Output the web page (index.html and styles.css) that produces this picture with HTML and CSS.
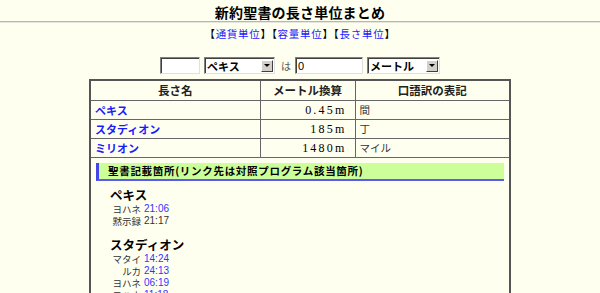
FILE: index.html
```html
<!DOCTYPE html>
<html lang="ja">
<head>
<meta charset="utf-8">
<title>新約聖書の長さ単位まとめ</title>
<link rel="stylesheet" href="styles.css">
</head>
<body>
<h1 class="title">新約聖書の長さ単位まとめ</h1>
<hr class="rule">
<p class="nav">【<a href="#">通貨単位</a>】【<a href="#">容量単位</a>】【<a href="#">長さ単位</a>】</p>
<form class="conv">
  <input class="field short" type="text" value="">
  <span class="sel sel-a"><select><option>ペキス</option></select><span class="arrow"></span></span>
  <span class="ha">は</span>
  <input class="field long" type="text" value="0">
  <span class="sel sel-b"><select><option>メートル</option></select><span class="arrow"></span></span>
</form>
<table class="units">
  <colgroup><col class="c1"><col class="c2"><col class="c3"></colgroup>
  <thead>
    <tr class="hrow"><th>長さ名</th><th>メートル換算</th><th>口語訳の表記</th></tr>
  </thead>
  <tbody>
    <tr class="drow"><td><a href="#" class="name">ペキス</a></td><td class="val">0.45m</td><td class="kogo">間</td></tr>
    <tr class="drow"><td><a href="#" class="name">スタディオン</a></td><td class="val">185m</td><td class="kogo">丁</td></tr>
    <tr class="drow"><td><a href="#" class="name">ミリオン</a></td><td class="val">1480m</td><td class="kogo">マイル</td></tr>
    <tr>
      <td colspan="3" class="refs">
        <h2 class="bar">聖書記載箇所(リンク先は対照プログラム該当箇所)</h2>
        <h3 class="unit">ペキス</h3>
        <dl class="list">
          <dt>ヨハネ</dt><dd><a href="#">21:06</a></dd>
          <dt>黙示録</dt><dd>21:17</dd>
        </dl>
        <h3 class="unit">スタディオン</h3>
        <dl class="list">
          <dt>マタイ</dt><dd><a href="#">14:24</a></dd>
          <dt>ルカ</dt><dd><a href="#">24:13</a></dd>
          <dt>ヨハネ</dt><dd><a href="#">06:19</a></dd>
          <dt>ヨハネ</dt><dd><a href="#">11:18</a></dd>
        </dl>
      </td>
    </tr>
  </tbody>
</table>
</body>
</html>
```
FILE: styles.css
```css
html, body {
  margin: 0;
  padding: 0;
  background: #fffff0;
  color: #000;
  font-family: "Noto Sans CJK JP", "Liberation Sans", sans-serif;
}
a { color: #1a1aff; text-decoration: none; }

.title {
  margin: 0;
  padding-top: 3px;
  height: 18px;
  font-size: 14px;
  line-height: 18px;
  font-weight: 700;
  letter-spacing: 0.2px;
  text-align: center;
}
.rule {
  margin: 0;
  border: 0;
  border-top: 1px solid #b8b8b0;
  border-bottom: 1px solid #e6e6de;
  height: 0;
}
.nav {
  margin: 4px 0 0;
  font-size: 10.5px;
  line-height: 14px;
  letter-spacing: 0.7px;
  text-align: center;
}
.conv {
  margin: 16px 0 0;
  height: 17px;
  display: flex;
  justify-content: center;
  align-items: center;
  gap: 4px;
  font-size: 11px;
}
.field {
  box-sizing: border-box;
  height: 17px;
  margin: 0;
  padding: 0 2px;
  border: 1px solid #808080;
  border-right-color: #e0e0e0;
  border-bottom-color: #e0e0e0;
  box-shadow: inset 1px 1px 0 #404040;
  background: #fff;
  font: 11px "Liberation Sans", sans-serif;
}
.short { width: 40px; }
.long { width: 68px; }
.sel {
  box-sizing: border-box;
  height: 17px;
  display: inline-flex;
  align-items: center;
  border: 1px solid #808080;
  border-right-color: #e0e0e0;
  border-bottom-color: #e0e0e0;
  box-shadow: inset 1px 1px 0 #404040;
  background: #fff;
  padding: 1px 1px 1px 2px;
}
.sel-a { width: 71px; }
.sel-b { width: 73px; }
.sel select {
  appearance: none;
  -webkit-appearance: none;
  border: 0;
  background: transparent;
  flex: 1;
  min-width: 0;
  padding: 0;
  margin: 0;
  height: 14px;
  font: 700 11px "Noto Sans CJK JP", sans-serif;
  line-height: 14px;
  color: #000;
}
.arrow {
  width: 12px;
  height: 12px;
  box-sizing: border-box;
  background: #d4d0c8;
  border: 1px solid #fff;
  border-right-color: #404040;
  border-bottom-color: #404040;
  display: flex;
  align-items: center;
  justify-content: center;
}
.arrow::after {
  content: "";
  border-left: 3px solid transparent;
  border-right: 3px solid transparent;
  border-top: 3px solid #000;
}
.ha {
  font-size: 10px;
  width: 10px;
  color: #555;
  margin: 0 0 0 2px;
}

.units {
  margin: 5px auto 0;
  width: 420px;
  border-collapse: collapse;
  border: 2px solid #555;
  table-layout: fixed;
  font-size: 11px;
}
.c1 { width: 170px; }
.c2 { width: 95px; }
.c3 { width: 155px; }
.units th, .units td {
  border: 1px solid #666;
  padding: 0 4px;
  line-height: 14px;
}
.hrow { height: 20px; }
.drow { height: 19px; }
.units th {
  font-size: 11.5px;
  font-weight: 700;
  color: #222;
}
.name { font-weight: 700; font-size: 11px; }
.val {
  text-align: right;
  font-family: "Liberation Serif", serif;
  font-size: 12px;
  letter-spacing: 2.2px;
  padding-right: 8px !important;
}
.kogo { font-size: 10.5px; color: #333; }

.refs {
  padding: 5px 5px 20px !important;
  vertical-align: top;
}
.bar {
  margin: 0;
  height: 16px;
  line-height: 16px;
  background: #ccff99;
  border-left: 3px solid #4646e6;
  border-bottom: 2px solid #5a5aee;
  padding-left: 9px;
  font-size: 10.5px;
  font-weight: 700;
  letter-spacing: 0.7px;
}
.unit {
  margin: 7px 0 0 14px;
  font-size: 12.5px;
  line-height: 14px;
  font-weight: 700;
}
.list {
  margin: 1px 0 11px;
  display: grid;
  grid-template-columns: 45px auto;
  grid-auto-rows: 12px;
  column-gap: 3px;
  row-gap: 0;
  font-size: 9.5px;
  line-height: 12px;
}
.list dt { text-align: right; color: #333; height: 12px; line-height: 12px; }
.list dd { margin: 0; height: 12px; font-family: "Liberation Sans", sans-serif; font-size: 10px; line-height: 12px; color: #333; }
.list dd a { color: #3333ff; }
```
